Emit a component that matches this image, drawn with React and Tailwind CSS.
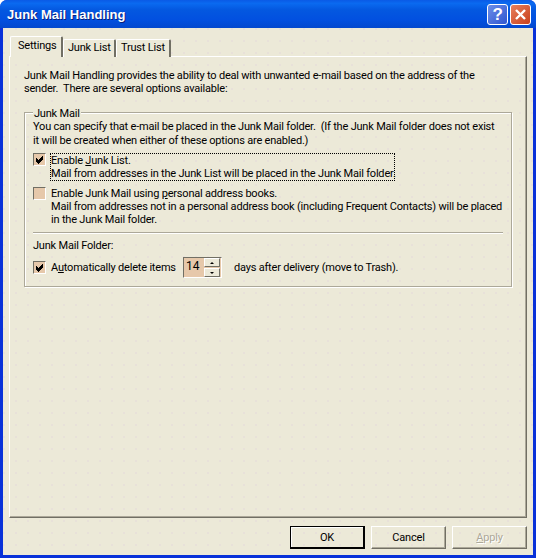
const Check = () => (
  <svg width="9" height="9" viewBox="0 0 9 9" className="block">
    <path d="M1 3.5 L3.5 6 L8 1.5 M1 4.5 L3.5 7 L8 2.5 M1 5.5 L3.5 8 L8 3.5" stroke="#000" strokeWidth="1" fill="none" shapeRendering="crispEdges" />
  </svg>
);

const Box = ({ checked }) => (
  <div className="w-[13px] h-[13px] shrink-0 flex items-center justify-center bg-[#e6c8aa] border border-[#716f64] border-r-white border-b-white">
    {checked && <Check />}
  </div>
);

const Btn = ({ children, def, off }) => (
  <div className={"w-[75px] h-[23px] flex items-center justify-center border " + (def ? "border-black border-r-2 border-b-2 shadow-[inset_1px_1px_0_#fff]" : "border-white border-r-[#716f64] border-b-[#716f64] shadow-[inset_-1px_-1px_0_#aca899]") + (off ? " text-[#aca899]" : " text-black")}>
    {children}
  </div>
);

const Tab = ({ children, active }) => (
  <div className={active
    ? "w-[53px] h-[21px] bg-[#ece9d8] border-l border-t border-white border-r-2 border-r-[#716f64] flex items-start pl-[7px] pt-[2px] rounded-t-[2px] relative z-10"
    : "h-[18px] bg-[#ece9d8] border-l border-t border-white border-r-2 border-r-[#716f64] flex items-start pl-[4px] pt-px rounded-t-[2px]"}>
    {children}
  </div>
);

export default function App() {
  return (
    <div className="w-[536px] h-[558px] flex flex-col bg-[#0831d9] text-[11px] tracking-[-0.2px] leading-[13px] text-black whitespace-nowrap font-['Roboto',sans-serif] rounded-t-[7px] overflow-hidden">
      <div className="h-[28px] shrink-0 flex items-center justify-between pl-[7px] pr-[5px] bg-[linear-gradient(180deg,#0a5ae6_0%,#0a6af0_12%,#0458e0_35%,#0250e0_70%,#0348ce_100%)]">
        <span className="text-white font-bold text-[13px] tracking-normal font-['Liberation_Sans',sans-serif] [text-shadow:1px_1px_0_#0b1f7a]">Junk Mail Handling</span>
        <div className="flex gap-[2px]">
          <div className="w-[21px] h-[21px] rounded-[3px] border border-white bg-[linear-gradient(135deg,#6d8fe8,#2f55d0)] flex items-center justify-center text-white font-bold text-[17px] font-['Liberation_Sans',sans-serif]">?</div>
          <div className="w-[21px] h-[21px] rounded-[3px] border border-white bg-[linear-gradient(135deg,#e8805c,#c8401c)] flex items-center justify-center">
            <svg width="13" height="13" viewBox="0 0 13 13"><path d="M2 2 L11 11 M11 2 L2 11" stroke="#fff" strokeWidth="2.4" /></svg>
          </div>
        </div>
      </div>
      <div className="flex-1 mx-[3px] mb-[3px] bg-[#ece9d8] flex flex-col pl-[6px] pr-[6px] pt-[8px] bg-[radial-gradient(circle_at_1px_1px,#e8e1d9_0.8px,transparent_0.8px)] bg-[size:12px_12px]">
        <div className="flex items-end pl-[1px] h-[21px] shrink-0 -mb-px relative z-10">
          <Tab active>Settings</Tab>
          <div className="w-[53px]"><Tab>Junk List</Tab></div>
          <div className="w-[55px]"><Tab>Trust List</Tab></div>
        </div>
        <div className="h-[462px] w-[518px] shrink-0 border border-white border-r-[#716f64] border-b-[#716f64] shadow-[inset_-1px_-1px_0_#aca899] pl-[14px] pr-[14px] pt-[12px]">
          <p>Junk Mail Handling provides the ability to deal with unwanted e-mail based on the address of the<br />sender.&nbsp; There are several options available:</p>
          <div className="mt-[17px] h-[175px] border border-[#aca899] shadow-[inset_1px_1px_0_#fff,1px_1px_0_#fff] pl-[8px] pr-[8px] relative">
            <span className="absolute left-[8px] -top-[6px] bg-[#ece9d8] px-px">Junk Mail</span>
            <p className="pt-[7px] leading-[14px]">You can specify that e-mail be placed in the Junk Mail folder.&nbsp; (If the Junk Mail folder does not exist<br />it will be created when either of these options are enabled.)</p>
            <div className="flex mt-[5px] gap-[4px] items-start">
              <Box checked />
              <div className="border border-dotted border-black w-[345px]">
                Enable <u>J</u>unk List.<br />Mail from addresses in the Junk List will be placed in the Junk Mail folder.
              </div>
            </div>
            <div className="flex mt-[6px] gap-[5px] items-start">
              <Box />
              <div>
                Enable Junk Mail using <u>p</u>ersonal address books.<br />Mail from addresses not in a personal address book (including Frequent Contacts) will be placed<br />in the Junk Mail folder.
              </div>
            </div>
            <div className="mt-[6px] border-t border-[#aca899] shadow-[0_1px_0_#fff]"></div>
            <p className="mt-[6px]">Junk Mail Folder:</p>
            <div className="flex items-center mt-[5px] h-[21px]">
              <Box checked />
              <span className="ml-[5px] w-[132px]">A<u>u</u>tomatically delete items</span>
              <div className="w-[39px] h-[21px] border border-[#716f64] border-r-white border-b-white bg-[#e6c8aa] flex items-center pl-[2px] pr-px justify-between">
                <span className="text-[12px] tracking-normal -mt-[2px]">14</span>
                <div className="flex flex-col gap-px">
                  <div className="w-[16px] h-[9px] border border-white border-r-[#716f64] border-b-[#716f64] bg-[#ece9d8] flex items-center justify-center"><div className="w-0 h-0 border-x-[2px] border-x-transparent border-b-[2px] border-b-black"></div></div>
                  <div className="w-[16px] h-[9px] border border-white border-r-[#716f64] border-b-[#716f64] bg-[#ece9d8] flex items-center justify-center"><div className="w-0 h-0 border-x-[2px] border-x-transparent border-t-[2px] border-t-black"></div></div>
                </div>
              </div>
              <span className="ml-[12px]">days after delivery (move to Trash).</span>
            </div>
          </div>
        </div>
        <div className="flex justify-end gap-[6px] mt-[8px] pr-0">
          <Btn def>OK</Btn>
          <Btn>Cancel</Btn>
          <Btn off><span className="[text-shadow:1px_1px_0_#fff]"><u>A</u>pply</span></Btn>
        </div>
      </div>
    </div>
  );
}
